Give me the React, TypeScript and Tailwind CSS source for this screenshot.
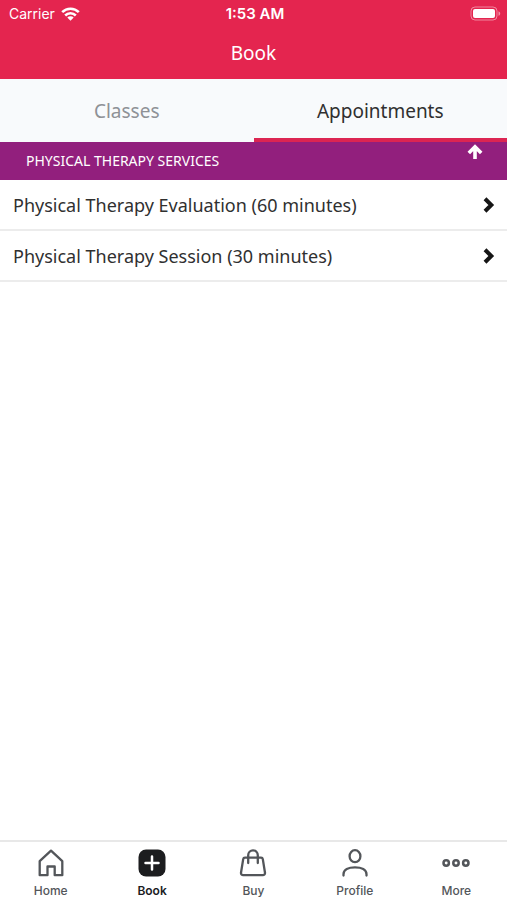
import { useState } from "react";
import type { ReactNode } from "react";

const services = [
  { id: "evaluation", name: "Physical Therapy Evaluation (60 minutes)" },
  { id: "session", name: "Physical Therapy Session (30 minutes)" },
];

function WifiIcon() {
  return (
    <svg width="19" height="14" viewBox="0 0 19 14" aria-hidden="true">
      <g fill="none" stroke="white" strokeWidth="2.6">
        <path d="M1.2 5.2a11.7 11.7 0 0 1 16.6 0" />
        <path d="M4.2 8.5a7.5 7.5 0 0 1 10.6 0" />
      </g>
      <path d="M9.5 13.8 6.3 10.6a4.5 4.5 0 0 1 6.4 0Z" fill="white" />
    </svg>
  );
}

function BatteryIcon() {
  return (
    <svg width="31" height="15" viewBox="0 0 31 15" aria-hidden="true">
      <rect x="1" y="1" width="26" height="13" rx="4" fill="none" stroke="white" strokeOpacity="0.45" />
      <rect x="3" y="3" width="22" height="9" rx="2" fill="white" />
      <path d="M28.5 5.2v4.6c1-.4 1.7-1.3 1.7-2.3s-.7-1.9-1.7-2.3Z" fill="white" fillOpacity="0.5" />
    </svg>
  );
}

function ArrowUpIcon() {
  return (
    <svg width="16" height="16" viewBox="0 0 16 16" aria-hidden="true">
      <path d="M8 15V3M1.8 9 8 2.8 14.2 9" fill="none" stroke="white" strokeWidth="3.6" />
    </svg>
  );
}

function ChevronIcon() {
  return (
    <svg width="12" height="16" viewBox="0 0 12 16" className="shrink-0" aria-hidden="true">
      <path d="M2 1.8 8.3 8 2 14.2" fill="none" stroke="#151515" strokeWidth="4" />
    </svg>
  );
}

function HomeIcon() {
  return (
    <svg width="28" height="28" viewBox="0 0 28 28" aria-hidden="true">
      <path
        d="M2.7 12.2 14 1.7l11.3 10.5v14h-7.6v-8.7h-7.2v8.7H2.7Z"
        fill="none"
        stroke="currentColor"
        strokeWidth="2.3"
        strokeLinejoin="round"
      />
    </svg>
  );
}

function BookIcon() {
  return (
    <svg width="28" height="28" viewBox="0 0 28 28" aria-hidden="true">
      <rect x="0.5" y="0.5" width="27" height="27" rx="7.5" fill="currentColor" />
      <path d="M14 7.5v13M7.500 14h13" stroke="white" strokeWidth="2.5" strokeLinecap="round" />
    </svg>
  );
}

function BagIcon() {
  return (
    <svg width="28" height="28" viewBox="0 0 28 28" aria-hidden="true">
      <g fill="none" stroke="currentColor" strokeWidth="2.3" strokeLinecap="round" strokeLinejoin="round">
        <path d="M6 8.6h16a1.800 1.800 0 0 1 1.800 1.500l2.200 13.600a2.200 2.200 0 0 1-2.200 2.500H4.200A2.200 2.200 0 0 1 2 23.700l2.200-13.600A1.800 1.800 0 0 1 6 8.600Z" />
        <path d="M9.200 14V6.200a4.800 4.800 0 0 1 9.600 0V14" />
      </g>
    </svg>
  );
}

function ProfileIcon() {
  return (
    <svg width="28" height="28" viewBox="0 0 28 28" aria-hidden="true">
      <g fill="none" stroke="currentColor" strokeWidth="2.3" strokeLinecap="round">
        <ellipse cx="14" cy="7.2" rx="5.4" ry="6" />
        <path d="M2.500 26.500v-1.200c0-4.600 4.900-6.900 11.500-6.900s11.500 2.300 11.500 6.900v1.200" />
      </g>
    </svg>
  );
}

function MoreIcon() {
  return (
    <svg width="28" height="28" viewBox="0 0 28 28" aria-hidden="true">
      <g fill="none" stroke="currentColor" strokeWidth="2.5">
        <circle cx="4.2" cy="14" r="2.7" />
        <circle cx="14" cy="14" r="2.7" />
        <circle cx="23.800" cy="14" r="2.7" />
      </g>
    </svg>
  );
}

const navItems: { label: string; icon: ReactNode }[] = [
  { label: "Home", icon: <HomeIcon /> },
  { label: "Book", icon: <BookIcon /> },
  { label: "Buy", icon: <BagIcon /> },
  { label: "Profile", icon: <ProfileIcon /> },
  { label: "More", icon: <MoreIcon /> },
];

export default function App() {
  const [tab, setTab] = useState("Appointments");
  const [page, setPage] = useState("Book");

  return (
    <div className="flex min-h-screen flex-col bg-white font-['Noto_Sans',sans-serif] text-[#303030]">
      {/* Status bar and title */}
      <header className="bg-[#e4254f] text-white">
        <div className="grid h-[27px] grid-cols-3 items-center pr-1.5 pl-[9px] font-['Inter',sans-serif] text-[14px]">
          <div className="flex items-center gap-1.5">
            <span>Carrier</span>
            <WifiIcon />
          </div>
          <span className="text-center text-[15px] leading-[27px] font-semibold">1:53 AM</span>
          <div className="flex justify-end">
            <BatteryIcon />
          </div>
        </div>
        <h1 className="h-[52px] text-center text-[19px] leading-[52px]">Book</h1>
      </header>

      {/* Tabs */}
      <div role="tablist" className="grid h-[63px] grid-cols-2 bg-[#f8fafc]">
        {["Classes", "Appointments"].map((name) => (
          <button
            key={name}
            type="button"
            role="tab"
            aria-selected={tab === name}
            onClick={() => setTab(name)}
            className={`border-b-4 pt-1.5 text-[19px] ${
              tab === name ? "border-[#dc2552] text-[#303030]" : "border-transparent text-[#8e9196]"
            }`}
          >
            {name}
          </button>
        ))}
      </div>

      <main className="grow">
        {/* Section header */}
        <div className="flex h-[38px] items-start justify-between bg-[#921f7d] pr-6 pl-[26px] text-white">
          <h2 className="text-[14px] leading-[38px]">PHYSICAL THERAPY SERVICES</h2>
          <button type="button" aria-label="Collapse section" className="pt-0.5">
            <ArrowUpIcon />
          </button>
        </div>

        <ul>
          {services.map((service) => (
            <li key={service.id} className="border-b-2 border-[#ececec]">
              <button
                type="button"
                className="flex h-[49px] w-full items-center justify-between pr-3 pl-[13px] text-left text-[18px]"
              >
                <span className="pt-0.5">{service.name}</span>
                <ChevronIcon />
              </button>
            </li>
          ))}
        </ul>
      </main>

      {/* Bottom navigation */}
      <nav className="grid h-[60px] grid-cols-5 border-t-2 border-[#e8e8e8] font-['Inter',sans-serif]">
        {navItems.map((item) => (
          <button
            key={item.label}
            type="button"
            aria-current={page === item.label ? "page" : undefined}
            onClick={() => setPage(item.label)}
            className={`flex flex-col items-center gap-[5px] pt-[7px] text-[12px] leading-[18px] ${
              page === item.label ? "font-semibold text-[#1c1d1f]" : "font-medium text-[#53565a]"
            }`}
          >
            {item.icon}
            <span>{item.label}</span>
          </button>
        ))}
      </nav>
    </div>
  );
}
